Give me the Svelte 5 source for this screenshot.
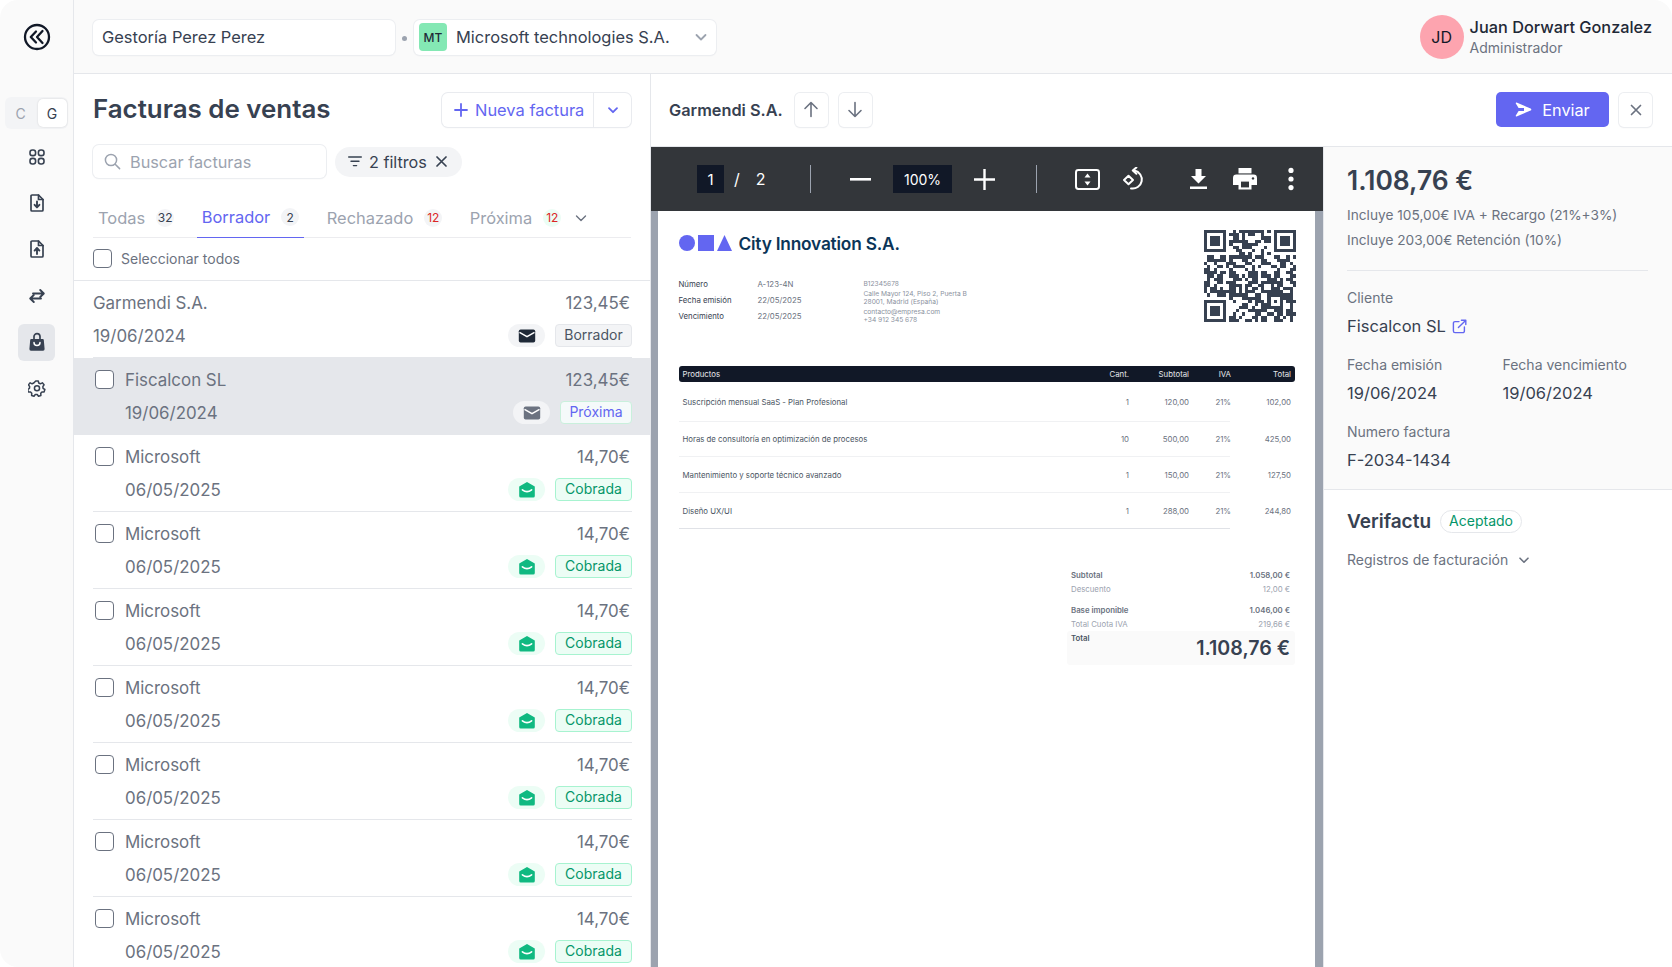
<script>
  const tabs = [
    { label: "Todas", count: 32 },
    { label: "Borrador", count: 2, active: true },
    { label: "Rechazado", count: 12, red: true },
    { label: "Próxima", count: 12, red: true, green: true },
  ];

  const invoices = [
    { name: "Garmendi S.A.", date: "19/06/2024", amount: "123,45€", status: "Borrador", kind: "draft", nocheck: true },
    { name: "Fiscalcon SL", date: "19/06/2024", amount: "123,45€", status: "Próxima", kind: "next", selected: true },
    ...Array.from({ length: 7 }, () => ({ name: "Microsoft", date: "06/05/2025", amount: "14,70€", status: "Cobrada", kind: "paid" })),
  ];

  const lines = [
    { name: "Suscripción mensual SaaS - Plan Profesional", qty: 1, sub: "120,00", iva: "21%", total: "102,00", h: 40 },
    { name: "Horas de consultoría en optimización de procesos", qty: 10, sub: "500,00", iva: "21%", total: "425,00", h: 35 },
    { name: "Mantenimiento y soporte técnico avanzado", qty: 1, sub: "150,00", iva: "21%", total: "127,50", h: 36 },
    { name: "Diseño UX/UI", qty: 1, sub: "288,00", iva: "21%", total: "244,80", h: 36 },
  ];

  // fake qr: finder squares plus seeded noise
  const QR = 29;
  let seed = 4242;
  function rnd() {
    seed = (seed * 16807) % 2147483647;
    return seed / 2147483647;
  }
  function inFinder(x, y) {
    return (x < 8 && y < 8) || (x > QR - 9 && y < 8) || (x < 8 && y > QR - 9);
  }
  function inAlign(x, y) {
    return x >= 20 && x <= 24 && y >= 20 && y <= 24;
  }
  const cells = [];
  for (let y = 0; y < QR; y++) {
    for (let x = 0; x < QR; x++) {
      if (!inFinder(x, y) && !inAlign(x, y) && rnd() > 0.46) cells.push([x, y]);
    }
  }
  const finders = [[0, 0], [QR - 7, 0], [0, QR - 7]];
</script>

<div class="app">
  <aside class="sidebar">
    <div class="logo">
      <svg width="28" height="28" viewBox="0 0 28 28" fill="none" stroke="#111827" stroke-width="2.3" stroke-linejoin="round" stroke-linecap="round">
        <circle cx="14" cy="14" r="12" />
        <path d="M13 8.5 L7.8 14 L13 19.5" />
        <path d="M19.5 8 L14 14 L19.5 20" />
      </svg>
    </div>
    <div class="switch">
      <span class="switch-off">C</span>
      <span class="switch-on">G</span>
    </div>
    <nav class="nav">
      <span class="nav-item">
        <svg width="18" height="18" viewBox="0 0 18 18" fill="none" stroke="#374151" stroke-width="1.6">
          <rect x="2" y="2" width="5.6" height="5.6" rx="2.4" /><rect x="10.4" y="2" width="5.6" height="5.6" rx="2.4" />
          <rect x="2" y="10.4" width="5.6" height="5.6" rx="2.4" /><rect x="10.4" y="10.4" width="5.6" height="5.6" rx="2.4" />
        </svg>
      </span>
      <span class="nav-item">
        <svg width="18" height="20" viewBox="0 0 18 20" fill="none" stroke="#374151" stroke-width="1.7" stroke-linejoin="round" stroke-linecap="round">
          <path d="M3 3 a1 1 0 0 1 1-1 h6.5 L15 6.5 V17 a1 1 0 0 1-1 1 H4 a1 1 0 0 1-1-1 Z" />
          <path d="M10.5 2 V6.5 H15" />
          <path d="M9 8.5 V14 M6.6 11.8 L9 14.4 L11.4 11.8" stroke-width="1.9" />
        </svg>
      </span>
      <span class="nav-item">
        <svg width="18" height="20" viewBox="0 0 18 20" fill="none" stroke="#374151" stroke-width="1.7" stroke-linejoin="round" stroke-linecap="round">
          <path d="M3 3 a1 1 0 0 1 1-1 h6.5 L15 6.5 V17 a1 1 0 0 1-1 1 H4 a1 1 0 0 1-1-1 Z" />
          <path d="M10.5 2 V6.5 H15" />
          <path d="M9 15 V9.2 M6.6 11.6 L9 9 L11.4 11.6" stroke-width="1.9" />
        </svg>
      </span>
      <span class="nav-item">
        <svg width="18" height="18" viewBox="0 0 18 18" fill="none" stroke="#374151" stroke-width="1.9" stroke-linejoin="round" stroke-linecap="round">
          <path d="M5 6.5 H15.5 M12.2 3 L15.8 6.5 L12.2 10" />
          <path d="M13 11.5 H2.5 M5.8 8 L2.2 11.5 L5.8 15" />
        </svg>
      </span>
      <span class="nav-item nav-active">
        <svg width="18" height="20" viewBox="0 0 18 20">
          <path d="M3.2 7 H14.8 a1 1 0 0 1 1 .9 L16.6 17 a1.6 1.6 0 0 1-1.6 1.7 H3 a1.6 1.6 0 0 1-1.6-1.7 L2.2 7.9 a1 1 0 0 1 1-.9 Z" fill="#374151" />
          <path d="M6 8 V4.6 a3 3 0 0 1 6 0 V8" fill="none" stroke="#374151" stroke-width="1.7" />
          <path d="M6 10.5 a3 3 0 0 0 6 0" fill="none" stroke="#fff" stroke-width="1.5" stroke-linecap="round" />
        </svg>
      </span>
      <span class="nav-item">
        <svg width="18" height="18" viewBox="0 0 24 24" fill="none" stroke="#374151" stroke-width="2" stroke-linejoin="round">
          <path d="M10.3 2.6 h3.4 l.6 2.8 2.2 1 2.6-1.3 2.3 2.6-1.6 2.4 .3 2.4 2.4 1.5-1 3.2-2.9 .1-1.6 1.8 .2 2.9-3.2 1-1.7-2.3 h-2.6 l-1.7 2.3-3.2-1 .2-2.9-1.6-1.8-2.9-.1-1-3.2 2.4-1.5 .3-2.4-1.6-2.4 2.3-2.6 2.6 1.3 2.2-1 Z" />
          <circle cx="12" cy="12.4" r="3.4" />
        </svg>
      </span>
    </nav>
  </aside>

  <div class="main">
    <header class="topbar">
      <div class="field org">Gestoría Perez Perez</div>
      <span class="dot"></span>
      <div class="field company">
        <span class="company-badge">MT</span>
        <span class="company-name">Microsoft technologies S.A.</span>
        <svg class="company-chev" width="14" height="14" viewBox="0 0 14 14" fill="none" stroke="#9ca3af" stroke-width="1.8" stroke-linecap="round" stroke-linejoin="round"><path d="M2.5 5 L7 9.5 L11.5 5" /></svg>
      </div>
      <div class="user">
        <span class="avatar">JD</span>
        <div class="user-text">
          <div class="user-name">Juan Dorwart Gonzalez</div>
          <div class="user-role">Administrador</div>
        </div>
      </div>
    </header>

    <div class="content">
      <section class="list">
        <div class="list-head">
          <h1>Facturas de ventas</h1>
          <div class="new-btn">
            <span class="new-main">
              <svg width="14" height="14" viewBox="0 0 14 14" fill="none" stroke="#6366f1" stroke-width="1.8" stroke-linecap="round"><path d="M7 1 V13 M1 7 H13" /></svg>
              Nueva factura
            </span>
            <span class="new-more">
              <svg width="12" height="12" viewBox="0 0 12 12" fill="none" stroke="#6366f1" stroke-width="1.8" stroke-linecap="round" stroke-linejoin="round"><path d="M2 4.2 L6 8.2 L10 4.2" /></svg>
            </span>
          </div>
        </div>

        <div class="filters">
          <div class="search">
            <svg width="17" height="17" viewBox="0 0 17 17" fill="none" stroke="#9ca3af" stroke-width="1.5" stroke-linecap="round"><circle cx="7" cy="7" r="5.6" /><path d="M11.2 11.2 L15.6 15.6" /></svg>
            <span>Buscar facturas</span>
          </div>
          <div class="filter-pill">
            <svg width="14" height="11" viewBox="0 0 14 11" fill="none" stroke="#374151" stroke-width="1.4" stroke-linecap="round"><path d="M.7 1 H13.3 M3 5.3 H11 M5.4 9.6 H8.6" /></svg>
            <span>2 filtros</span>
            <svg width="11" height="11" viewBox="0 0 11 11" fill="none" stroke="#374151" stroke-width="1.7" stroke-linecap="round"><path d="M1 1 L10 10 M10 1 L1 10" /></svg>
          </div>
        </div>

        <div class="tabs">
          {#each tabs as tab}
            <div class="tab" class:tab-active={tab.active}>
              <span>{tab.label}</span>
              <span class="count" class:count-red={tab.red} class:count-green={tab.green}>{tab.count}</span>
            </div>
          {/each}
          <svg class="tabs-chev" width="12" height="12" viewBox="0 0 12 12" fill="none" stroke="#6b7280" stroke-width="1.4" stroke-linecap="round" stroke-linejoin="round"><path d="M1.5 4 L6 8.5 L10.5 4" /></svg>
        </div>

        <label class="select-all">
          <span class="check check-all"></span>
          <span>Seleccionar todos</span>
        </label>

        <div class="rows">
          {#each invoices as inv}
            <div class="row" class:row-selected={inv.selected}>
              <div class="row-inner">
                {#if !inv.nocheck}
                  <span class="check"></span>
                {/if}
                <div class="row-main">
                  <div class="row-line">
                    <span>{inv.name}</span>
                    <span class="amount">{inv.amount}</span>
                  </div>
                  <div class="row-line row-line-2">
                    <span>{inv.date}</span>
                    <span class="row-tags">
                      <span class="mail mail-{inv.kind}">
                        {#if inv.kind === "paid"}
                          <svg width="18" height="18" viewBox="0 0 18 18">
                            <path d="M9 1 L16.8 5.6 V15 a1.6 1.6 0 0 1-1.6 1.6 H2.8 A1.6 1.6 0 0 1 1.2 15 V5.6 Z" fill="#10b981" />
                            <path d="M4.4 8.8 Q9 12.6 13.6 8.8" fill="none" stroke="#fff" stroke-width="1.6" stroke-linecap="round" />
                          </svg>
                        {:else}
                          <svg width="18" height="14" viewBox="0 0 18 14">
                            <rect x="0.8" y="0.5" width="16.4" height="13" rx="1.8" fill={inv.kind === "draft" ? "#1f2937" : "#6b7280"} />
                            <path d="M1.5 3.4 L9 7.6 L16.5 3.4" fill="none" stroke="#fff" stroke-width="1.5" />
                          </svg>
                        {/if}
                      </span>
                      <span class="badge badge-{inv.kind}">{inv.status}</span>
                    </span>
                  </div>
                </div>
              </div>
            </div>
          {/each}
        </div>
      </section>

      <section class="detail">
        <div class="detail-head">
          <span class="detail-title">Garmendi S.A.</span>
          <span class="icon-btn">
            <svg width="16" height="17" viewBox="0 0 16 17" fill="none" stroke="#6b7280" stroke-width="1.6" stroke-linecap="round" stroke-linejoin="round"><path d="M8 15.5 V1.5 M2 7.5 L8 1.5 L14 7.5" /></svg>
          </span>
          <span class="icon-btn">
            <svg width="16" height="17" viewBox="0 0 16 17" fill="none" stroke="#6b7280" stroke-width="1.6" stroke-linecap="round" stroke-linejoin="round"><path d="M8 1.5 V15.5 M2 9.5 L8 15.5 L14 9.5" /></svg>
          </span>
          <button class="send">
            <svg width="17" height="15" viewBox="0 0 17 15"><path d="M1.6 .6 L15.6 6.4 a1.2 1.2 0 0 1 0 2.2 L1.6 14.4 a.6 .6 0 0 1-.8-.8 L3.6 9 H9 V6 H3.6 L.8 1.4 a.6 .6 0 0 1 .8-.8 Z" fill="#fff" /></svg>
            Enviar
          </button>
          <span class="icon-btn close-btn">
            <svg width="12" height="12" viewBox="0 0 12 12" fill="none" stroke="#6b7280" stroke-width="1.7" stroke-linecap="round"><path d="M1.5 1.5 L10.5 10.5 M10.5 1.5 L1.5 10.5" /></svg>
          </span>
        </div>

        <div class="detail-body">
          <div class="viewer">
            <div class="toolbar">
              <div class="pager">
                <span class="tb-box page-box">1</span>
                <span class="slash">/</span>
                <span class="total-pages">2</span>
              </div>
              <span class="tb-sep"></span>
              <svg class="tb-minus" width="21" height="3" viewBox="0 0 21 3"><rect width="21" height="2.6" fill="#fff" /></svg>
              <span class="tb-box zoom-box">100%</span>
              <svg class="tb-plus" width="21" height="21" viewBox="0 0 21 21"><path d="M10.5 0 V21 M0 10.5 H21" stroke="#fff" stroke-width="2.4" /></svg>
              <span class="tb-sep sep-2"></span>
              <svg class="tb-fit" width="25" height="21" viewBox="0 0 25 21" fill="none">
                <rect x="1" y="1" width="23" height="19" rx="2.4" stroke="#fff" stroke-width="2" />
                <path d="M12.5 4.4 L15.5 8.4 H9.5 Z M12.5 16.6 L9.5 12.6 H15.5 Z" fill="#fff" />
              </svg>
              <svg class="tb-rotate" width="24" height="24" viewBox="0 0 24 24" fill="none" stroke="#fff" stroke-width="2" stroke-linejoin="round">
                <path d="M7 12 L11.5 7.8 L16 12 L11.5 16.2 Z" transform="translate(-4 1)" />
                <path d="M13.5 3.6 A9 9 0 1 1 10 21.4" stroke-linecap="round" />
                <path d="M15.4 .4 L11.8 3.6 L15.4 6.8" stroke-linecap="round" />
              </svg>
              <svg class="tb-down" width="17" height="20" viewBox="0 0 17 20"><path d="M5.5 0 H11.5 V7 H16 L8.5 14.5 L1 7 H5.5 Z M0 17.4 H17 V20 H0 Z" fill="#fff" /></svg>
              <svg class="tb-print" width="24" height="22" viewBox="0 0 24 22">
                <path d="M5.5 0 H18.5 V5.4 H5.5 Z" fill="#fff" />
                <path d="M3.4 6.6 H20.6 A3.4 3.4 0 0 1 24 10 V17 H18.5 V21.6 H5.5 V17 H0 V10 A3.4 3.4 0 0 1 3.4 6.6 Z" fill="#fff" />
                <rect x="8" y="13.6" width="8" height="5.8" fill="#33363a" />
                <circle cx="20" cy="10.4" r="1.2" fill="#33363a" />
              </svg>
              <svg class="tb-dots" width="6" height="24" viewBox="0 0 6 24" fill="#fff"><circle cx="3" cy="3.4" r="2.6" /><circle cx="3" cy="12" r="2.6" /><circle cx="3" cy="20.6" r="2.6" /></svg>
            </div>

            <div class="paper-wrap">
              <div class="paper">
                <div class="paper-top">
                  <div class="paper-left">
                    <div class="brand">
                      <span class="shape-circle"></span>
                      <span class="shape-square"></span>
                      <svg width="15" height="16" viewBox="0 0 15 16"><path d="M7.5 0 L15 16 H0 Z" fill="#6366f1" /></svg>
                      <span class="brand-name">City Innovation S.A.</span>
                    </div>
                    <div class="meta">
                      <div class="meta-grid">
                        <span>Número</span><span class="meta-val">A-123-4N</span>
                        <span>Fecha emisión</span><span class="meta-val">22/05/2025</span>
                        <span>Vencimiento</span><span class="meta-val">22/05/2025</span>
                      </div>
                      <div class="meta-addr">
                        <div>B12345678</div>
                        <div class="addr-gap">Calle Mayor 124, Piso 2, Puerta B</div>
                        <div>28001, Madrid (España)</div>
                        <div class="addr-gap">contacto@empresa.com</div>
                        <div>+34 912 345 678</div>
                      </div>
                    </div>
                  </div>
                  <svg class="qr" width="92" height="92" viewBox="0 0 29 29" shape-rendering="crispEdges" fill="#374151">
                    {#each finders as [fx, fy]}
                      <path d="M{fx} {fy} h7 v7 h-7 Z M{fx + 1} {fy + 1} v5 h5 v-5 Z" fill-rule="evenodd" />
                      <rect x={fx + 2} y={fy + 2} width="3" height="3" />
                    {/each}
                    <path d="M20 20 h5 v5 h-5 Z M21 21 v3 h3 v-3 Z" fill-rule="evenodd" />
                    <rect x="22" y="22" width="1" height="1" />
                    {#each cells as [x, y]}
                      <rect {x} {y} width="1" height="1" />
                    {/each}
                  </svg>
                </div>

                <div class="table-head table-cols">
                  <span>Productos</span><span class="r">Cant.</span><span class="r">Subtotal</span><span class="r">IVA</span><span class="r">Total</span>
                </div>
                {#each lines as line, i}
                  <div class="table-row table-cols" style="height: {line.h - 1}px">
                    <span class="prod">{line.name}</span><span class="r">{line.qty}</span><span class="r">{line.sub}</span><span class="r">{line.iva}</span><span class="r">{line.total}</span>
                  </div>
                  <div class="table-line" class:table-line-last={i === lines.length - 1}></div>
                {/each}

                <div class="totals">
                  <div class="t-line t-strong"><span>Subtotal</span><span>1.058,00 €</span></div>
                  <div class="t-line"><span>Descuento</span><span>12,00 €</span></div>
                  <div class="t-line t-strong t-gap"><span>Base imponible</span><span>1.046,00 €</span></div>
                  <div class="t-line"><span>Total Cuota IVA</span><span>219,66 €</span></div>
                  <div class="t-total"><span>Total</span><strong>1.108,76 €</strong></div>
                </div>
              </div>
            </div>
          </div>

          <aside class="summary">
            <div class="summary-top">
              <div class="price">1.108,76 €</div>
              <div class="incl">Incluye 105,00€ IVA + Recargo (21%+3%)</div>
              <div class="incl">Incluye 203,00€ Retención (10%)</div>
              <div class="summary-rule"></div>
              <div class="lbl">Cliente</div>
              <div class="val">
                Fiscalcon SL
                <svg width="15" height="15" viewBox="0 0 15 15" fill="none" stroke="#6366f1" stroke-width="1.4" stroke-linecap="round" stroke-linejoin="round"><path d="M7 2.6 H3 A1.6 1.6 0 0 0 1.4 4.2 V12 A1.6 1.6 0 0 0 3 13.6 H10.8 A1.6 1.6 0 0 0 12.4 12 V8" /><path d="M6.4 8.6 L13.6 1.4 M9.4 1.2 H13.8 V5.6" /></svg>
              </div>
              <div class="two">
                <div>
                  <div class="lbl">Fecha emisión</div>
                  <div class="val">19/06/2024</div>
                </div>
                <div>
                  <div class="lbl">Fecha vencimiento</div>
                  <div class="val">19/06/2024</div>
                </div>
              </div>
              <div class="lbl">Numero factura</div>
              <div class="val">F-2034-1434</div>
            </div>
            <div class="verifactu">
              <div class="vf-head">
                <span class="vf-title">Verifactu</span>
                <span class="vf-pill">Aceptado</span>
              </div>
              <div class="vf-records">
                Registros de facturación
                <svg width="12" height="12" viewBox="0 0 12 12" fill="none" stroke="#6b7280" stroke-width="1.6" stroke-linecap="round" stroke-linejoin="round"><path d="M2 4.2 L6 8.2 L10 4.2" /></svg>
              </div>
            </div>
          </aside>
        </div>
      </section>
    </div>
  </div>
</div>

<style>
  :global(body) {
    margin: 0;
    background: #fff;
    font-family: Inter, "Liberation Sans", sans-serif;
    color: #374151;
  }

  .app {
    display: flex;
    width: 1672px;
    height: 967px;
    overflow: hidden;
    border-radius: 18px;
    background: #fff;
  }

  .sidebar {
    width: 74px;
    flex: none;
    box-sizing: border-box;
    border-right: 1px solid #e5e7eb;
    background: #fafafa;
    display: flex;
    flex-direction: column;
    align-items: center;
  }

  .logo {
    height: 28px;
    margin-top: 23px;
  }

  .switch {
    margin-top: 46px;
    width: 63px;
    height: 32px;
    box-sizing: border-box;
    border-radius: 6px;
    background: #f3f4f6;
    display: flex;
    align-items: center;
    justify-content: space-between;
    padding: 0 1px 0 0;
    font-size: 14px;
    margin-left: -1px;
  }

  .switch-off {
    width: 32px;
    text-align: center;
    color: #9ca3af;
  }

  .switch-on {
    width: 29px;
    height: 28px;
    border-radius: 5px;
    background: #fff;
    box-shadow: 0 0 2px rgba(0, 0, 0, 0.15);
    display: flex;
    align-items: center;
    justify-content: center;
    color: #374151;
  }

  .nav {
    margin-top: 9px;
    display: flex;
    flex-direction: column;
    gap: 9.4px;
    align-items: center;
  }

  .nav-item {
    width: 37px;
    height: 37px;
    display: flex;
    align-items: center;
    justify-content: center;
    border-radius: 6px;
  }

  .nav-active {
    background: #e5e7eb;
  }

  .main {
    flex: 1;
    min-width: 0;
    display: flex;
    flex-direction: column;
  }

  .topbar {
    height: 74px;
    flex: none;
    box-sizing: border-box;
    border-bottom: 1px solid #e5e7eb;
    background: #fafafa;
    display: flex;
    align-items: center;
    padding: 1px 20px 0 19px;
  }

  .field {
    height: 35px;
    box-sizing: border-box;
    background: #fff;
    border-radius: 6px;
    box-shadow: 0 0 0 1px #eceef1, 0 1px 2px rgba(0, 0, 0, 0.06);
    display: flex;
    align-items: center;
    font-size: 16.45px;
    color: #374151;
  }

  .org {
    width: 302px;
    padding-left: 9px;
  }

  .dot {
    width: 5px;
    height: 5px;
    border-radius: 50%;
    background: #9ca3af;
    margin: 2px 7px 0 7px;
  }

  .company {
    width: 302px;
    padding: 0 8px 0 5px;
  }

  .company-badge {
    width: 28px;
    height: 28px;
    border-radius: 4px;
    background: #84e8b4;
    font-size: 12px;
    font-weight: 500;
    color: #1f2937;
    display: flex;
    align-items: center;
    justify-content: center;
    margin-right: 9px;
  }

  .company-name {
    flex: 1;
  }

  .user {
    margin-left: auto;
    display: flex;
    align-items: center;
    gap: 6px;
  }

  .avatar {
    width: 44px;
    height: 44px;
    border-radius: 50%;
    background: #fda4af;
    display: flex;
    align-items: center;
    justify-content: center;
    font-size: 16px;
    color: #111827;
  }

  .user-name {
    font-size: 16.3px;
    font-weight: 500;
    line-height: 22px;
    color: #1f2937;
  }

  .user-role {
    font-size: 14px;
    line-height: 20px;
    color: #6b7280;
  }

  .content {
    flex: 1;
    min-height: 0;
    display: flex;
  }

  .list {
    width: 577px;
    flex: none;
    box-sizing: border-box;
    border-right: 1px solid #e5e7eb;
    overflow: hidden;
  }

  .list-head {
    display: flex;
    align-items: center;
    justify-content: space-between;
    padding: 19px 19px 0 19px;
    height: 34px;
  }

  h1 {
    margin: 0;
    padding-bottom: 3px;
    font-size: 25.9px;
    font-weight: 600;
    color: #374151;
  }

  .new-btn {
    display: flex;
    width: 189px;
    height: 34px;
    box-sizing: border-box;
    border-radius: 6px;
    background: #fff;
    box-shadow: 0 0 0 1px #e9ebef, 0 1px 2px rgba(0, 0, 0, 0.06);
    color: #6366f1;
    font-size: 16.45px;
  }

  .new-main {
    flex: 1;
    display: flex;
    align-items: center;
    gap: 7px;
    padding-left: 12px;
    border-right: 1px solid #e9ebef;
  }

  .new-more {
    width: 37px;
    display: flex;
    align-items: center;
    justify-content: center;
  }

  .filters {
    display: flex;
    align-items: center;
    gap: 9px;
    padding: 18px 0 0 19px;
  }

  .search {
    width: 233px;
    height: 33px;
    box-sizing: border-box;
    border-radius: 6px;
    background: #fff;
    box-shadow: 0 0 0 1px #eceef1, 0 1px 2px rgba(0, 0, 0, 0.06);
    display: flex;
    align-items: center;
    gap: 9px;
    padding-left: 11px;
    font-size: 16.3px;
    color: #9ca3af;
  }

  .filter-pill {
    width: 127px;
    height: 30px;
    box-sizing: border-box;
    border-radius: 15px;
    background: #f3f4f6;
    display: flex;
    align-items: center;
    gap: 7px;
    padding-left: 13px;
    font-size: 16.2px;
    color: #374151;
  }

  .filter-pill svg:last-child {
    margin-left: 2px;
  }

  .tabs {
    display: flex;
    align-items: stretch;
    gap: 17.5px;
    margin: 21px 19px 0 19px;
    height: 39px;
    box-sizing: border-box;
    border-bottom: 1px solid #ececef;
    font-size: 16.45px;
    color: #9ca3af;
  }

  .tab {
    display: flex;
    align-items: center;
    gap: 11px;
    padding: 0 5px 2px;
    height: 39px;
    box-sizing: border-box;
  }

  .tab-active {
    color: #6366f1;
    border-bottom: 1px solid #6366f1;
  }

  .count {
    width: 18px;
    height: 18px;
    border-radius: 50%;
    background: #f3f4f6;
    color: #374151;
    font-size: 12px;
    display: flex;
    align-items: center;
    justify-content: center;
  }

  .count-red {
    color: #dc2626;
  }

  .count-green {
    background: #ecfdf5;
  }

  .tabs-chev {
    align-self: center;
    margin-left: -9px;
  }

  .select-all {
    display: flex;
    align-items: center;
    gap: 9px;
    padding: 0 0 2px 19px;
    height: 43px;
    border-bottom: 1px solid #e5e7eb;
    font-size: 14px;
    color: #6b7280;
    box-sizing: border-box;
  }

  .check {
    width: 19px;
    height: 19px;
    flex: none;
    box-sizing: border-box;
    border: 1.4px solid #6b7280;
    border-radius: 4px;
    background: #fff;
    margin: 3px 11px 0 2px;
  }

  .check-all {
    margin: 0;
  }

  .row {
    padding: 0 18px 0 19px;
    height: 77px;
    box-sizing: border-box;
  }

  .row-selected {
    background: #e5e7eb;
  }

  .row-inner {
    display: flex;
    height: 77px;
    box-sizing: border-box;
    padding-top: 9px;
    border-bottom: 1px solid #e5e7eb;
  }

  .row-main {
    flex: 1;
    min-width: 0;
    font-size: 16.9px;
    color: #6b7280;
  }

  .row-line {
    display: flex;
    align-items: center;
    justify-content: space-between;
    height: 24px;
    padding-top: 1px;
    box-sizing: border-box;
  }

  .amount {
    margin-right: 2px;
  }

  .row-line-2 {
    height: 23px;
    margin-top: 10px;
    padding-top: 0;
  }

  .row-tags {
    display: flex;
    align-items: center;
    gap: 10px;
  }

  .mail {
    width: 37px;
    height: 23px;
    border-radius: 12px;
    background: #f3f4f6;
    display: flex;
    align-items: center;
    justify-content: center;
  }

  .mail-paid {
    background: #ecfdf5;
  }

  .badge {
    height: 23px;
    box-sizing: border-box;
    width: 77px;
    padding-bottom: 2px;
    border-radius: 4px;
    border: 1px solid #e5e7eb;
    background: #f3f4f6;
    font-size: 14px;
    color: #4b5563;
    display: flex;
    align-items: center;
    justify-content: center;
  }

  .badge-next {
    width: 72px;
    color: #6366f1;
    background: #f5fafa;
    border-color: #c9f0dc;
  }

  .badge-paid {
    color: #059669;
    background: #ecfdf5;
    border-color: #a7f3d0;
  }

  .detail {
    flex: 1;
    min-width: 0;
    display: flex;
    flex-direction: column;
  }

  .detail-head {
    height: 73px;
    flex: none;
    box-sizing: border-box;
    border-bottom: 1px solid #e5e7eb;
    display: flex;
    align-items: center;
    padding: 0 20px 1px 18px;
  }

  .detail-title {
    font-size: 16.3px;
    font-weight: 600;
    color: #374151;
    margin-right: 12px;
  }

  .icon-btn {
    width: 33px;
    height: 34px;
    box-sizing: border-box;
    border-radius: 5px;
    background: #fff;
    box-shadow: 0 0 0 1px #eceef1, 0 1px 2px rgba(0, 0, 0, 0.06);
    display: flex;
    align-items: center;
    justify-content: center;
    margin-right: 11px;
  }

  .close-btn {
    margin: 0 0 0 10px;
  }

  .send {
    margin-left: auto;
    width: 113px;
    height: 35px;
    border: 0;
    border-radius: 5px;
    background: #6366f1;
    color: #fff;
    font: 400 16.3px Inter, sans-serif;
    display: flex;
    align-items: center;
    justify-content: center;
    gap: 10px;
  }

  .detail-body {
    flex: 1;
    min-height: 0;
    display: flex;
  }

  .viewer {
    width: 672px;
    flex: none;
    display: flex;
    flex-direction: column;
    background: #9ca3af;
  }

  .toolbar {
    height: 64px;
    flex: none;
    background: #33363a;
    display: flex;
    align-items: center;
    padding-left: 46px;
    color: #fff;
  }

  .tb-box {
    height: 28px;
    background: #111827;
    display: flex;
    align-items: center;
    justify-content: center;
    color: #fff;
    font-size: 14px;
  }

  .pager {
    width: 113px;
    display: flex;
    align-items: center;
    font-size: 16px;
  }

  .page-box {
    width: 27px;
    font-size: 15px;
  }

  .slash {
    margin-left: 10px;
  }

  .total-pages {
    margin-left: 16px;
  }

  .tb-sep {
    width: 1px;
    height: 28px;
    background: #9ca3af;
  }

  .tb-minus {
    margin-left: 39px;
  }

  .zoom-box {
    width: 59px;
    margin-left: 22px;
  }

  .tb-plus {
    margin-left: 22px;
  }

  .sep-2 {
    margin-left: 41px;
  }

  .tb-fit {
    margin-left: 38px;
  }

  .tb-rotate {
    margin-left: 21px;
  }

  .tb-down {
    margin-left: 45px;
  }

  .tb-print {
    margin-left: 26px;
  }

  .tb-dots {
    margin-left: 31px;
  }

  .paper-wrap {
    flex: 1;
    min-height: 0;
    padding: 0 8px 0 7px;
    overflow: hidden;
  }

  .paper {
    height: 100%;
    background: #fff;
    padding: 20px 20px 0 20.5px;
    box-sizing: border-box;
  }

  .paper-top {
    display: flex;
    justify-content: space-between;
    height: 135px;
  }

  .brand {
    display: flex;
    align-items: center;
    margin-top: 1.5px;
    gap: 3px;
  }

  .shape-circle,
  .shape-square {
    width: 16px;
    height: 16px;
    background: #6366f1;
    display: block;
  }

  .shape-circle {
    border-radius: 50%;
  }

  .brand-name {
    margin-left: 4px;
    font-size: 17.3px;
    font-weight: 600;
    color: #0b3558;
    letter-spacing: -0.2px;
  }

  .meta {
    display: flex;
    margin-top: 22px;
  }

  .meta-grid {
    display: grid;
    grid-template-columns: 79px 106px;
    font-size: 7.8px;
    line-height: 16.4px;
    color: #374151;
  }

  .meta-val {
    color: #6b7280;
  }

  .meta-addr {
    font-size: 6.65px;
    line-height: 8px;
    color: #8b92a0;
    margin-top: 4px;
  }

  .addr-gap {
    margin-top: 2px;
  }

  .qr {
    margin-top: -1px;
    margin-right: -.5px;
  }

  .table-cols {
    display: grid;
    grid-template-columns: 1fr 60px 60px 42px 60px;
    align-items: center;
    padding: 0 4px;
    font-size: 7.8px;
  }

  .table-head {
    height: 16px;
    background: #111827;
    color: #e5e7eb;
    border-radius: 3px;
  }

  .table-row {
    color: #6b7280;
  }

  .prod {
    color: #4b5563;
  }

  .r {
    text-align: right;
  }

  .table-line {
    width: 551px;
    height: 1px;
    background: #f0f1f3;
  }

  .table-line-last {
    background: #e0e2e7;
  }

  .totals {
    margin: 39px 0 0 auto;
    width: 228px;
    font-size: 7.8px;
    color: #9ca3af;
  }

  .t-line {
    display: flex;
    justify-content: space-between;
    padding: 0 5px 0 4px;
    line-height: 14px;
  }

  .t-strong {
    font-weight: 600;
    color: #6b7280;
  }

  .t-gap {
    margin-top: 7px;
  }

  .t-total {
    display: flex;
    justify-content: space-between;
    height: 34px;
    box-sizing: border-box;
    padding: 2px 5px 0 4px;
    background: #fafafa;
    border-radius: 3px;
    font-weight: 600;
    color: #4b5563;
  }

  .t-total strong {
    font-size: 19.6px;
    font-weight: 600;
    color: #374151;
    line-height: 28px;
    margin-top: 1px;
  }

  .summary {
    flex: 1;
    min-width: 0;
    border-left: 1px solid #e5e7eb;
  }

  .summary-top {
    height: 343px;
    box-sizing: border-box;
    background: #fafafa;
    border-bottom: 1px solid #e5e7eb;
    padding: 16px 24px 0 23px;
  }

  .price {
    font-size: 26.4px;
    font-weight: 600;
    color: #374151;
    line-height: 34px;
  }

  .incl {
    font-size: 13.7px;
    line-height: 25px;
    color: #6b7280;
  }

  .incl:nth-child(2) {
    margin-top: 6px;
  }

  .summary-rule {
    height: 1px;
    background: #e5e7eb;
    margin: 17px 0 17px;
  }

  .lbl {
    font-size: 14px;
    line-height: 20px;
    color: #6b7280;
  }

  .val {
    font-size: 16.5px;
    line-height: 24px;
    margin-top: 6px;
    color: #374151;
    display: flex;
    align-items: center;
    gap: 6px;
    margin-bottom: 17px;
  }

  .two {
    display: grid;
    grid-template-columns: 155.5px 1fr;
  }

  .verifactu {
    padding: 20px 20px 0 23px;
  }

  .vf-head {
    display: flex;
    align-items: center;
    gap: 9px;
  }

  .vf-title {
    font-size: 19px;
    font-weight: 600;
    color: #374151;
  }

  .vf-pill {
    height: 23px;
    width: 82px;
    padding-bottom: 2px;
    box-sizing: border-box;
    border: 1px solid #e5e7eb;
    border-radius: 12px;
    font-size: 14px;
    color: #059669;
    display: flex;
    align-items: center;
    justify-content: center;
  }

  .vf-records {
    margin-top: 17px;
    font-size: 14px;
    line-height: 20px;
    color: #6b7280;
    display: flex;
    align-items: center;
    gap: 10px;
  }
</style>
